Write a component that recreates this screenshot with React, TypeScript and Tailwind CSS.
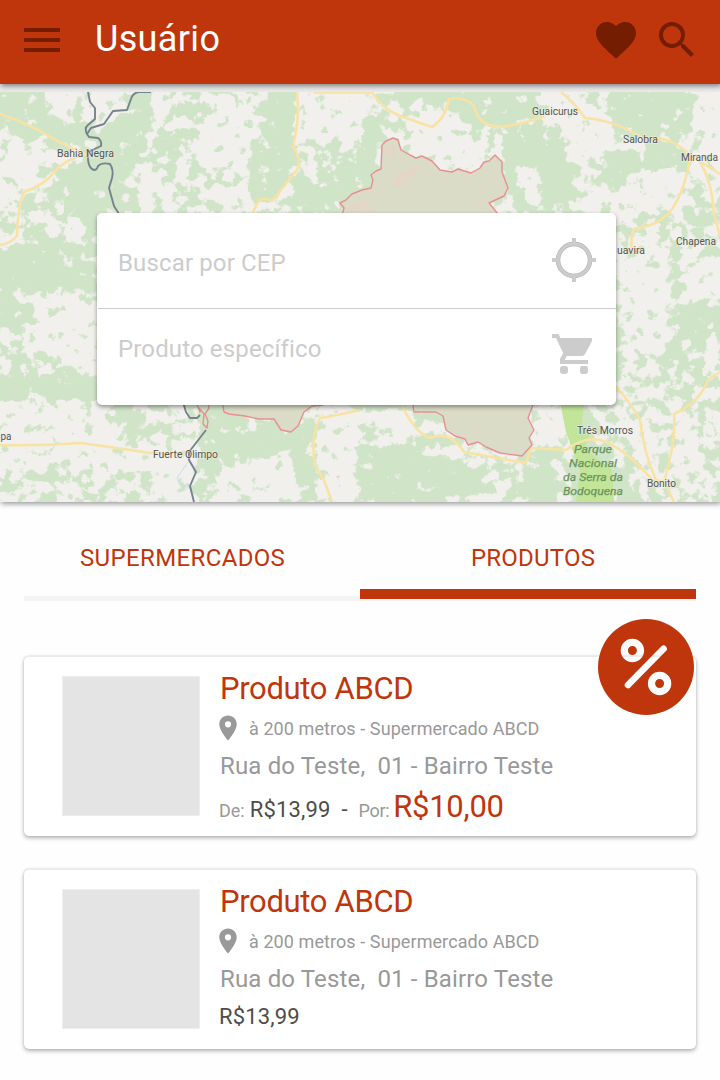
import React from "react";
import { MdFavorite, MdLocationOn, MdMenu, MdSearch } from "react-icons/md";

type Label = { x: number; y: number; text: string; width: number };

const labels: Label[] = [
  { x: 57, y: 157, text: "Bahia Negra", width: 57 },
  { x: 532, y: 115, text: "Guaicurus", width: 46 },
  { x: 623, y: 143, text: "Salobra", width: 35 },
  { x: 681, y: 161, text: "Miranda", width: 37 },
  { x: 676, y: 245, text: "Chapena", width: 40 },
  { x: 617, y: 254, text: "uavira", width: 28 },
  { x: 577, y: 434, text: "Três Morros", width: 56 },
  { x: 647, y: 487, text: "Bonito", width: 29 },
  { x: 153, y: 458, text: "Fuerte Olimpo", width: 65 },
  { x: 0.5, y: 440, text: "pa", width: 11 },
];

const parkLabels: Label[] = [
  { x: 574, y: 453, text: "Parque", width: 38 },
  { x: 569, y: 467, text: "Nacional", width: 48 },
  { x: 563, y: 481, text: "da Serra da", width: 60 },
  { x: 563, y: 495, text: "Bodoquena", width: 60 },
];

/* Light areas become forest, dark areas become open land. */
const forest = [
  "M0 92H42L46 112 84 122 86 150 40 140 0 128Z",
  "M100 128L140 92H152L146 140 128 165 122 212H100L96 165Z",
  "M160 132L182 138 176 160 158 150Z M186 96L200 94 198 120 184 112Z",
  "M272 92H294L290 140 298 165 270 205H252L262 130Z",
  "M295 190L350 160 372 150V212H290Z",
  "M50 180L97 155 100 212 97 240 60 200Z",
  "M0 252L30 235 97 245V292H0Z",
  "M0 300H35L20 330 0 325Z M0 385L40 372 97 382V402L30 396 0 402Z",
  "M115 405L135 405 138 436 122 438Z",
  "M206 402H232L240 425 300 450 312 500 285 490 235 455 214 470 205 502H193Z",
  "M250 425L312 415V470L290 480Z",
  "M360 108L385 130 372 165 360 160Z M392 92L540 92 530 118 455 130 440 108Z",
  "M505 130L568 120 575 212H520L500 165Z",
  "M610 92H690V125L650 142 610 118Z M608 150L690 150 672 182 600 190Z",
  "M360 440L380 450 410 440 450 466 485 466 470 500H360Z",
  "M528 445L545 450 560 480 556 502H520Z",
  "M570 402H585L600 450 625 470 640 502H570Z",
  "M632 272L655 276 660 288 636 290Z M670 310L712 305 720 330 690 345Z",
  "M655 340L680 345 700 380 668 366Z M686 214L712 218 708 232 688 230Z",
];

const open = [
  "M44 92H78V120L50 118Z M88 92H132L122 112 104 124 92 118Z",
  "M300 92H372L360 140H310Z",
  "M150 92L172 94 168 112 150 116Z M198 120L232 100 262 120 244 165 200 170Z",
  "M136 178L170 180 168 198 140 205Z M214 190L246 180 250 212 222 212Z",
  "M0 150L42 140 46 165 22 190 0 205Z M55 212L85 220 82 242 62 232Z",
  "M36 300H97V375L70 360 36 345Z",
  "M10 294H97V302H12Z M62 256L97 252V262H66Z",
  "M0 404H108L120 450 200 440 194 502H158V470L0 464Z",
  "M220 462L290 455 302 500H222Z M320 405H358V502H322Z",
  "M412 112L450 104 490 150 480 168 410 160Z M543 92H575L610 120 608 152 570 158Z",
  "M635 172L690 168 680 208 590 210Z M695 92H720V180H695Z",
  "M534 405H562L568 440 532 444Z M620 250H660V300H620Z",
  "M622 300H668V360L640 350Z M620 400L656 430 650 470 624 440Z",
  "M680 260H720V296L690 300Z M676 420H700L696 470 672 480Z",
  "M370 414L400 412 420 430 390 434Z M516 170L536 168 544 208 524 208Z",
  "M576 190L600 180 604 210H580Z",
];

const roads = [
  "M0 114Q30 124 52 138Q66 146 86 154Q64 160 54 172Q46 184 24 192Q18 204 17 236Q10 244 0 245",
  "M297 92Q300 120 293 146Q302 160 297 170Q284 186 272 201Q260 196 257 204L252 214",
  "M314 92.5H372Q384 110 400 116L432 127Q446 118 449 99Q464 96 474 106Q478 126 500 127Q524 124 545 116",
  "M561 92Q574 102 585 118Q606 120 622 127L644 138Q672 136 688 154L720 174",
  "M690 158Q684 196 668 214Q656 226 634 229Q630 238 632 250",
  "M700 162Q712 182 714 214L720 236",
  "M0 445Q40 446 80 443Q118 448 150 453H188Q206 456 216 452",
  "M320 418Q334 416 360 410 M320 418Q310 438 315 466L324 480 332 502",
  "M402 405Q414 432 430 438Q450 430 464 452L526 463Q530 450 532 448L566 450Q588 434 606 442Q632 454 656 485",
  "M616 386Q634 408 640 420Q644 454 656 480L664 482Q676 442 674 414Q700 402 708 380L720 372",
  "M664 482L674 502",
];

function MapView() {
  return (
    <svg
      viewBox="0 92 720 410"
      className="block h-full w-full"
      fontFamily="Roboto, sans-serif"
    >
      <defs>
        <filter
          id="terrain"
          filterUnits="userSpaceOnUse"
          x="0"
          y="92"
          width="720"
          height="410"
          colorInterpolationFilters="sRGB"
        >
          <feGaussianBlur in="SourceGraphic" stdDeviation="4" />
          <feColorMatrix
            values="0 0 0 0 0  0 0 0 0 0  0 0 0 0 0  1 0 0 0 0"
            result="density"
          />
          <feTurbulence
            type="fractalNoise"
            baseFrequency="0.085"
            numOctaves="4"
            seed="11"
          />
          <feColorMatrix
            values="0 0 0 0 0  0 0 0 0 0  0 0 0 0 0  1 0 0 0 0"
            result="noise"
          />
          <feComposite
            in="density"
            in2="noise"
            operator="arithmetic"
            k2="0.6"
            k3="1"
            k4="-0.3"
          />
          <feComponentTransfer>
            <feFuncA type="linear" slope="12" intercept="-5.55" />
          </feComponentTransfer>
          <feGaussianBlur stdDeviation="0.6" result="mask" />
          <feFlood floodColor="#d0e4c8" />
          <feComposite in2="mask" operator="in" />
        </filter>
      </defs>

      <rect x="0" y="92" width="720" height="410" fill="#f1f0ec" />
      <g filter="url(#terrain)">
        <rect x="0" y="92" width="720" height="410" fill="#7c7c7c" />
        {forest.map((d) => (
          <path key={d} d={d} fill="#e8e8e8" />
        ))}
        {open.map((d) => (
          <path key={d} d={d} fill="#303030" />
        ))}
      </g>

      <path
        d="M560 402H584L582 425 590 434 584 448 612 470 614 502H576L580 470 566 432Z"
        fill="#c2e59a"
      />

      <g
        fill="#dadcc7"
        stroke="#e98f92"
        strokeWidth="1.4"
        strokeLinejoin="round"
      >
        <path d="M342 216L344 208 340 203 346 200 352 194 362 190 371 188 373 180 371 175 376 171 381 169 382 145 386 141 393 138 398 140 401 150 410 155 416 158 422 156 432 161 440 170 452 172 458 169 471 173 480 168 484 162 489 161 495 155 502 162 502 172 508 188 504 196 489 203 498 214V222H342Z" />
        <path d="M222 400L224 412 229 414 245 416 259 419 274 419 281 430 291 432 298 426 304 412 312 406 323 405V396Z" />
        <path d="M412 400L414 412 436 412 443 416 446 430 455 436 465 439 468 445 478 442 486 447 500 453 522 456 532 445 529 438 534 430 528 418 533 405V396Z" />
        <path
          d="M196 402L200 412 199 408 204 414 203 424 207 428 208 421 205 414 209 408 208 402"
          fill="none"
        />
      </g>
      <path
        d="M384 148L392 144 396 156 388 158Z M394 178L410 168 420 164 414 176 400 186 392 186Z M348 206L366 200 372 212H346Z"
        fill="#e3d6c6"
      />

      <g fill="none" stroke="#f8e2a4" strokeWidth="2.5" strokeLinejoin="round">
        {roads.map((d) => (
          <path key={d} d={d} />
        ))}
      </g>

      <g
        fill="none"
        stroke="#75838f"
        strokeWidth="1.9"
        strokeLinejoin="round"
      >
        <path d="M151 92H138Q132 94 131 99L127 110 113 111 104 124 91 128 87 134Q84 128 88 125L95 119 95 108 90 102 88 92" />
        <path d="M87 134L89 137 98 138Q102 141 101 146L88 152Q87 168 94 170Q97 170 98 166Q102 162 110 164Q114 170 112 178L109 188 114 206 119 214" />
        <path d="M183 402L186 412 190 418 197 418 200 415 M206 430L189 452 189 460 196 472 190 486 194 502" />
      </g>
      <path
        d="M188 462L177 478 182 486 189 486"
        fill="none"
        stroke="#c5dcec"
        strokeWidth="1"
      />

      <g
        fill="#55534f"
        stroke="#f6f5f1"
        strokeWidth="1.6"
        strokeOpacity="0.5"
        paintOrder="stroke"
        fontSize="10.8"
      >
        {labels.map((l) => (
          <text
            key={l.text}
            x={l.x}
            y={l.y}
            textLength={l.width}
            lengthAdjust="spacingAndGlyphs"
          >
            {l.text}
          </text>
        ))}
      </g>
      <g
        fill="#6a9459"
        stroke="#6a9459"
        strokeWidth="0.25"
        fontSize="11.8"
        fontStyle="italic"
      >
        {parkLabels.map((l) => (
          <text
            key={l.text}
            x={l.x}
            y={l.y}
            textLength={l.width}
            lengthAdjust="spacingAndGlyphs"
          >
            {l.text}
          </text>
        ))}
      </g>
    </svg>
  );
}

function LocateIcon({ className }: { className?: string }) {
  return (
    <svg viewBox="0 0 48 48" fill="none" className={className}>
      <circle cx="24" cy="24" r="16" stroke="#a9a9a9" strokeWidth="4.4" />
      <g stroke="currentColor">
        <circle cx="24" cy="24" r="16" strokeWidth="3.5" />
        <path
          d="M24 2v5M24 41v5M2 24h5M41 24h5"
          strokeWidth="4"
        />
      </g>
    </svg>
  );
}

function CartIcon({ className }: { className?: string }) {
  return (
    <svg viewBox="0 0 24 24" fill="currentColor" className={className}>
      <path d="M1 2v2h2l3.6 7.59-1.35 2.45c-.16.28-.25.61-.25.96v2h14v-2H7.4l.87-2h7.48c.75 0 1.41-.41 1.75-1.03L21 5.5V4H5.21l-.94-2H1z" />
      <rect x="5" y="18" width="4" height="4" rx="1.2" />
      <rect x="15" y="18" width="4" height="4" rx="1.2" />
    </svg>
  );
}

function DiscountBadge() {
  return (
    <svg viewBox="0 0 96 96" className="absolute -top-[38px] left-[574px] size-24">
      <mask id="percent">
        <rect width="96" height="96" fill="white" />
        <g fill="none" stroke="black">
          <circle cx="34.4" cy="31.5" r="8.1" strokeWidth="7.2" />
          <circle cx="61.6" cy="64.5" r="8.1" strokeWidth="7.2" />
          <path d="M65.6 29.8L30 66" strokeWidth="6.6" strokeLinecap="round" />
        </g>
      </mask>
      <circle cx="48" cy="48" r="48" fill="#bf360c" mask="url(#percent)" />
    </svg>
  );
}

function ProductCard({
  badge,
  children,
}: {
  badge?: boolean;
  children: React.ReactNode;
}) {
  return (
    <article className="relative flex h-[180px] gap-5 rounded-[5px] border-t border-[#ebebeb] bg-white pt-[19px] pl-[38px] shadow-[0_2px_4px_rgba(0,0,0,0.3),0_0_2px_rgba(0,0,0,0.12)]">
      <div className="h-[140px] w-[138px] shrink-0 border border-[#eeeeee] bg-[#e4e4e4]" />
      <div className="-mt-2 flex flex-col whitespace-pre">
        <h2 className="h-10 text-[31px] leading-[41px] tracking-[-0.33px] text-[#bf360c]">
          Produto ABCD
        </h2>
        <div className="mt-1.5 -ml-[7px] flex h-[30px] items-center text-[#999999]">
          <MdLocationOn className="-mt-[3px] size-[30px]" />
          <span className="ml-1.5 text-[18px] leading-[30px] tracking-[0.08px]">
            à 200 metros - Supermercado ABCD
          </span>
        </div>
        <p className="mt-1 h-9 text-[24px] leading-9 tracking-[0.15px] text-[#999999]">
          Rua do Teste,  01 - Bairro Teste
        </p>
        {children}
      </div>
      {badge && <DiscountBadge />}
    </article>
  );
}

export default function App() {
  return (
    <div className="h-[1080px] w-[720px] overflow-hidden bg-[#fefefe] font-['Roboto',sans-serif]">
      <header className="relative z-10 flex h-[84px] items-start bg-[#bf360c] pt-4 pl-[18px] text-[#741d00] shadow-[1px_2px_5px_rgba(0,0,0,0.45)]">
        <MdMenu className="size-12" />
        <h1 className="ml-[29px] text-[36px] leading-[46px] tracking-[0.35px] text-white">
          Usuário
        </h1>
        <MdFavorite className="mr-[13px] ml-auto size-12" />
        <MdSearch className="mr-[19px] size-12" />
      </header>

      <section className="h-[418px] bg-[#e9e9e9] pt-2 shadow-[1px_2px_5px_rgba(0,0,0,0.4)]">
        <div className="relative h-[410px]">
          <MapView />
          <form className="absolute top-[121px] left-[97px] flex h-48 w-[519px] flex-col rounded-[5px] bg-white text-[24px] tracking-[0.14px] text-[#cccccc] shadow-[0_2px_4px_rgba(0,0,0,0.4)]">
            <label className="ml-px flex h-24 items-start justify-between border-b border-[#cccccc] pr-[18px] pl-5">
              <span className="mt-[30px] leading-10">Buscar por CEP</span>
              <LocateIcon className="mt-[23px] size-12" />
            </label>
            <label className="ml-px flex h-24 items-start justify-between pr-[18px] pl-5">
              <span className="mt-5 leading-10">Produto específico</span>
              <CartIcon className="mt-[21px] size-12" />
            </label>
          </form>
        </div>
      </section>

      <nav className="mx-6 mt-[38px] grid h-[61px] grid-cols-2 text-[24px] leading-9 tracking-[0.36px] text-[#bf360c]">
        <a className="border-b-[5px] border-[#f4f4f4] pl-14">SUPERMERCADOS</a>
        <a className="flex flex-col border-b-2 border-[#f4f4f4]">
          <span className="pl-[111px] tracking-[0.2px]">PRODUTOS</span>
          <span className="mt-auto h-2.5 bg-[#bf360c]" />
        </a>
      </nav>

      <main className="mx-6 mt-[55px] flex flex-col gap-[33px]">
        <ProductCard badge>
          <p className="mt-[3px] -ml-px flex h-10 items-baseline text-[18px] leading-10 text-[#999999]">
            <span>De:</span>
            <span className="ml-[5px] text-[22px] tracking-[0.15px] text-[#4d4d4d]">
              R$13,99
            </span>
            <span className="ml-[11px] text-[22px] text-[#4d4d4d]">-</span>
            <span className="ml-[11px] tracking-[-0.35px]">Por:</span>
            <span className="ml-[4px] text-[31px] tracking-[-0.25px] text-[#bf360c]">
              R$10,00
            </span>
          </p>
        </ProductCard>
        <ProductCard>
          <p className="mt-[5px] -ml-px text-[22px] leading-[30px] tracking-[0.15px] text-[#4d4d4d]">
            R$13,99
          </p>
        </ProductCard>
      </main>
    </div>
  );
}
